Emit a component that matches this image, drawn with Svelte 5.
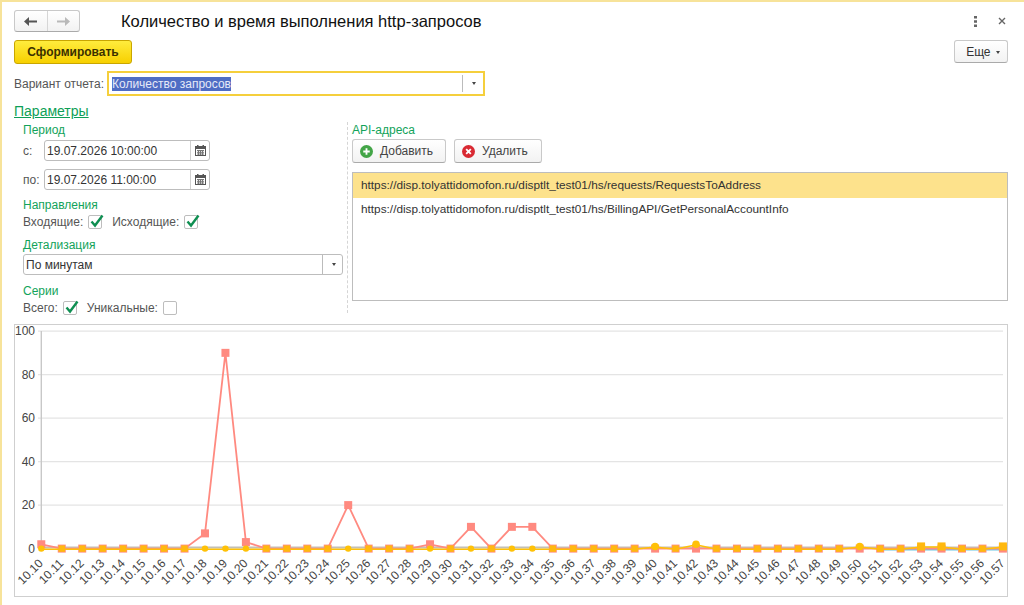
<script lang="ts">
  // Chart geometry, relative to the inside of the chart frame
  const X0 = 26.3;
  const STEP = 20.46;
  const Y0 = 223.6;
  const UNIT = 2.175;

  const red: Record<number, number> = { 0: 2, 8: 7, 9: 90, 10: 3, 15: 20, 19: 2, 21: 10, 23: 10, 24: 10 };
  const amber: Record<number, number> = { 30: 1, 32: 2, 40: 1, 43: 1, 44: 1, 47: 1 };
  const amberRaised = [43, 44, 47];

  const times = Array.from({ length: 48 }, (_, i) => `10.${10 + i}`);
  const px = (i: number) => X0 + i * STEP;
  const py = (v: number) => Y0 - v * UNIT;
  const line = (s: Record<number, number>, dy = 0) =>
    times.map((_, i) => `${px(i).toFixed(1)},${(py(s[i] ?? 0) + dy).toFixed(1)}`).join(' ');
  // amber marker is a circle where the red series is off zero or amber peaks alone
  const isCircle = (i: number) => (red[i] ?? 0) !== 0 || (amber[i] && !amberRaised.includes(i));

  const ticks = [100, 80, 60, 40, 20, 0];
  const urls = [
    'https://disp.tolyattidomofon.ru/disptlt_test01/hs/requests/RequestsToAddress',
    'https://disp.tolyattidomofon.ru/disptlt_test01/hs/BillingAPI/GetPersonalAccountInfo',
  ];
</script>

{#snippet calendar()}
  <svg class="cal" width="11" height="11" viewBox="0 0 11 11">
    <rect x="0.5" y="1.5" width="10" height="9" fill="#fff" stroke="#555" />
    <rect x="0" y="1" width="11" height="3" fill="#555" />
    <rect x="2" y="0" width="1.5" height="2" fill="#555" />
    <rect x="7.5" y="0" width="1.5" height="2" fill="#555" />
    <path d="M2 5.5h7M2 7.3h7M2 9h7M3.5 5v5M5.5 5v5M7.5 5v5" stroke="#777" stroke-width="1" fill="none" />
  </svg>
{/snippet}

{#snippet check(on: boolean)}
  <span class="box">
    {#if on}
      <svg width="16" height="16" viewBox="0 0 16 16" class="tick">
        <path d="M3.5 7.5 L7 11.5 L14.5 1.5" fill="none" stroke="#0f8f52" stroke-width="2.4" />
      </svg>
    {/if}
  </span>
{/snippet}

<div class="page">
  <header class="top">
    <div class="nav">
      <button class="nav-btn" aria-label="back">
        <svg width="13" height="9" viewBox="0 0 13 9"><path d="M13 3.4H5V0L0 4.5 5 9V5.6h8z" fill="#555" /></svg>
      </button>
      <button class="nav-btn" aria-label="forward">
        <svg width="13" height="9" viewBox="0 0 13 9"><path d="M0 3.4h8V0l5 4.5L8 9V5.6H0z" fill="#b9b9b9" /></svg>
      </button>
    </div>
    <h1>Количество и время выполнения http-запросов</h1>
    <div class="win">
      <svg width="3" height="11" viewBox="0 0 3 11"><path d="M0 0h3v2.6H0zM0 4.2h3v2.6H0zM0 8.4h3V11H0z" fill="#666" /></svg>
      <svg width="8" height="8" viewBox="0 0 8 8"><path d="M1 1l6 6M7 1 1 7" stroke="#666" stroke-width="1.4" /></svg>
    </div>
  </header>

  <div class="actions">
    <button class="primary">Сформировать</button>
    <button class="more">Еще <span class="caret"></span></button>
  </div>

  <div class="variant">
    <span class="lbl">Вариант отчета:</span>
    <div class="variant-input">
      <span class="selected">Количество запросов</span>
      <span class="drop"><span class="caret"></span></span>
    </div>
  </div>

  <div class="params-title">Параметры</div>

  <div class="params">
    <section class="left">
      <div class="group first">Период</div>
      <div class="date-row">
        <span class="lbl pre">с:</span>
        <div class="date"><span>19.07.2026 10:00:00</span><span class="date-btn">{@render calendar()}</span></div>
      </div>
      <div class="date-row second">
        <span class="lbl pre">по:</span>
        <div class="date"><span>19.07.2026 11:00:00</span><span class="date-btn">{@render calendar()}</span></div>
      </div>
      <div class="group">Направления</div>
      <div class="checks">
        <span class="lbl">Входящие:</span>{@render check(true)}
        <span class="lbl gap">Исходящие:</span>{@render check(true)}
      </div>
      <div class="group">Детализация</div>
      <div class="select"><span>По минутам</span><span class="drop"><span class="caret"></span></span></div>
      <div class="group g-ser">Серии</div>
      <div class="checks">
        <span class="lbl">Всего:</span>{@render check(true)}
        <span class="lbl gap">Уникальные:</span>{@render check(false)}
      </div>
    </section>

    <section class="right">
      <div class="group first">API-адреса</div>
      <div class="api-btns">
        <button class="btn add">
          <svg width="13" height="13" viewBox="0 0 14 14"><circle cx="7" cy="7" r="7" fill="#43a547" /><path d="M7 3.5v7M3.5 7h7" stroke="#fff" stroke-width="2" /></svg>
          Добавить
        </button>
        <button class="btn del">
          <svg width="13" height="13" viewBox="0 0 14 14"><circle cx="7" cy="7" r="7" fill="#d92a33" /><path d="M4.5 4.5l5 5M9.5 4.5l-5 5" stroke="#fff" stroke-width="2" /></svg>
          Удалить
        </button>
      </div>
      <div class="list">
        {#each urls as u, i}
          <div class="row" class:current={i === 0}>{u}</div>
        {/each}
      </div>
    </section>
  </div>

  <div class="chart">
    <svg width="992" height="271" viewBox="0 0 992 271">
      {#each ticks as t}
        {#if t !== 0}
          <line x1="23" x2="988" y1={py(t)} y2={py(t)} stroke="#e4e4e4" stroke-width="1.4" />
        {/if}
        <text class="tick-y" x="20" y={py(t) + 4} text-anchor="end">{t}</text>
      {/each}
      <line x1={X0} x2={X0} y1={py(100)} y2={Y0} stroke="#c8c8c8" stroke-width="1.4" />
      <line x1="23" x2="988" y1={Y0 - 1} y2={Y0 - 1} stroke="#c4c0b4" stroke-width="2" />

      <line x1={px(41)} x2={px(47)} y1={Y0 + 1} y2={Y0 + 1} stroke="#6cc5e4" stroke-width="2" />
      <polyline points={line(red)} fill="none" stroke="#ff8a80" stroke-width="1.8" />
      {#each times as _, i}
        <rect x={px(i) - 4} y={py(red[i] ?? 0) - 4} width="8" height="8" fill="#ff8a80" />
      {/each}
      <polyline points={line(amber, 0.6)} fill="none" stroke="#ffc107" stroke-width="1.6" />
      {#each times as _, i}
        {#if isCircle(i)}
          <circle cx={px(i)} cy={py(amber[i] ?? 0)} r={amber[i] ? 3.8 : 3.2} fill="#ffc107" />
        {:else}
          {@const s = amberRaised.includes(i) ? 8 : 6.4}
          <rect x={px(i) - s / 2} y={py(amber[i] ?? 0) - s / 2} width={s} height={s} fill="#ffb90f" />
        {/if}
      {/each}

      {#each times as t, i}
        <text class="tick-x" text-anchor="end" transform="translate({px(i) + 2.5} {Y0 + 15.5}) rotate(-45)">{t}</text>
      {/each}
    </svg>
  </div>
</div>

<style>
  :global(body) {
    margin: 0;
    background: #fff;
  }
  .page {
    box-sizing: border-box;
    width: 1024px;
    height: 605px;
    overflow: hidden;
    border-top: 2px solid #f7e39a;
    border-left: 2px solid #f7e39a;
    padding: 8px 16px 0 12px;
    font-family: "Liberation Sans", Arial, sans-serif;
    font-size: 12px;
    color: #333;
    background: #fff;
  }
  button {
    font-family: inherit;
    cursor: pointer;
  }
  .top {
    display: flex;
    align-items: center;
    height: 22px;
  }
  .nav {
    display: flex;
    width: 66px;
    height: 22px;
    box-sizing: border-box;
    border: 1px solid #c9c9c9;
    border-bottom-color: #aaa;
    border-radius: 3px;
    background: linear-gradient(#fff, #f2f2f2);
  }
  .nav-btn {
    flex: 1;
    padding: 0;
    border: none;
    background: none;
    display: flex;
    align-items: center;
    justify-content: center;
  }
  .nav-btn + .nav-btn {
    border-left: 1px solid #d6d6d6;
  }
  h1 {
    margin: 0 0 0 41px;
    font-size: 16.5px;
    font-weight: normal;
    color: #111;
    flex: 1;
  }
  .win {
    display: flex;
    align-items: center;
    gap: 21px;
    margin-right: 2px;
  }
  .actions {
    display: flex;
    justify-content: space-between;
    margin-top: 8px;
  }
  .primary {
    width: 118px;
    height: 24px;
    padding: 0;
    border: 1px solid #c9a600;
    border-radius: 3px;
    background: linear-gradient(#ffec3d, #f7d000);
    color: #3a3000;
    font-size: 12px;
    font-weight: bold;
  }
  .more {
    width: 54px;
    height: 23px;
    padding: 0 0 0 4px;
    border: 1px solid #c9c9c9;
    border-bottom-color: #aaa;
    border-radius: 3px;
    background: linear-gradient(#fff, #f2f2f2);
    color: #333;
    font-size: 12px;
  }
  .caret {
    display: inline-block;
    border-top: 3px solid #444;
    border-left: 2.5px solid transparent;
    border-right: 2.5px solid transparent;
    vertical-align: middle;
    margin-left: 2px;
  }
  .variant {
    display: flex;
    align-items: center;
    gap: 3px;
    margin-top: 7px;
  }
  .lbl {
    color: #555;
    white-space: nowrap;
  }
  .variant-input {
    box-sizing: border-box;
    width: 378px;
    height: 25px;
    border: 2px solid #f5cf3c;
    display: flex;
    align-items: center;
    justify-content: space-between;
    padding-left: 3px;
  }
  .selected {
    background: #4f6dc4;
    color: #e6eaf8;
    line-height: 14px;
  }
  .drop {
    width: 20px;
    height: 100%;
    box-sizing: border-box;
    border-left: 1px solid #bbb;
    display: flex;
    align-items: center;
    justify-content: center;
  }
  .variant-input .drop {
    width: 21px;
    height: 17px;
  }
  .params-title {
    margin-top: 7px;
    font-size: 14px;
    line-height: 16px;
    color: #0e9f57;
    text-decoration: underline;
  }
  .params {
    display: flex;
    align-items: flex-start;
    margin-top: 3px;
    height: 201px;
  }
  .left {
    box-sizing: border-box;
    width: 334px;
    height: 191px;
    padding: 0 3px 0 9px;
    border-right: 1px dashed #d5d5d5;
  }
  .right {
    width: 660px;
    padding-left: 4px;
    box-sizing: border-box;
    flex: none;
  }
  .group {
    color: #12a35a;
    line-height: 14px;
    margin-top: 8px;
  }
  .group.first {
    margin-top: 1px;
  }
  .group.g-ser {
    margin-top: 9px;
  }
  .date-row {
    display: flex;
    align-items: center;
    margin-top: 3px;
  }
  .date-row.second {
    margin-top: 8px;
  }
  .pre {
    width: 21px;
  }
  .date {
    box-sizing: border-box;
    width: 166px;
    height: 21px;
    border: 1px solid #bdbdbd;
    border-radius: 3px;
    display: flex;
    align-items: center;
    justify-content: space-between;
    padding-left: 2px;
    color: #333;
  }
  .date-btn {
    width: 18px;
    height: 100%;
    border-left: 1px solid #d0d0d0;
    display: flex;
    align-items: center;
    justify-content: center;
  }
  .checks {
    display: flex;
    align-items: center;
    height: 16px;
    margin-top: 2px;
  }
  .gap {
    margin-left: 10px;
  }
  .box {
    position: relative;
    box-sizing: border-box;
    width: 14px;
    height: 14px;
    margin-left: 5px;
    border: 1px solid #bdbdbd;
    border-radius: 2px;
    background: #fff;
  }
  .tick {
    position: absolute;
    left: -1px;
    top: -2px;
  }
  .select {
    box-sizing: border-box;
    width: 320px;
    height: 21px;
    margin-top: 2px;
    border: 1px solid #bdbdbd;
    border-radius: 3px;
    display: flex;
    align-items: center;
    justify-content: space-between;
    padding-left: 2px;
    color: #333;
  }
  .api-btns {
    display: flex;
    gap: 8px;
    margin-top: 2px;
  }
  .btn {
    box-sizing: border-box;
    height: 24px;
    padding: 0 0 0 7px;
    border: 1px solid #c9c9c9;
    border-bottom-color: #aaa;
    border-radius: 3px;
    background: linear-gradient(#fff, #f2f2f2);
    color: #444;
    font-size: 12px;
    display: flex;
    align-items: center;
    gap: 7px;
  }
  .add {
    width: 94px;
  }
  .del {
    width: 88px;
  }
  .list {
    box-sizing: border-box;
    height: 129px;
    width: 656px;
    margin-top: 9px;
    border: 1px solid #bdbdbd;
  }
  .row {
    height: 24px;
    line-height: 23px;
    padding-left: 8px;
    color: #333;
    font-size: 11.8px;
  }
  .current {
    background: #fde28c;
    height: 25px;
    line-height: 24px;
  }
  .chart {
    box-sizing: border-box;
    width: 994px;
    height: 273px;
    margin-top: 1px;
    border: 1px solid #cfcfcf;
  }
  .chart svg {
    display: block;
  }
  .tick-y,
  .tick-x {
    font-family: "Liberation Sans", Arial, sans-serif;
    font-size: 12px;
    fill: #444;
  }
</style>
